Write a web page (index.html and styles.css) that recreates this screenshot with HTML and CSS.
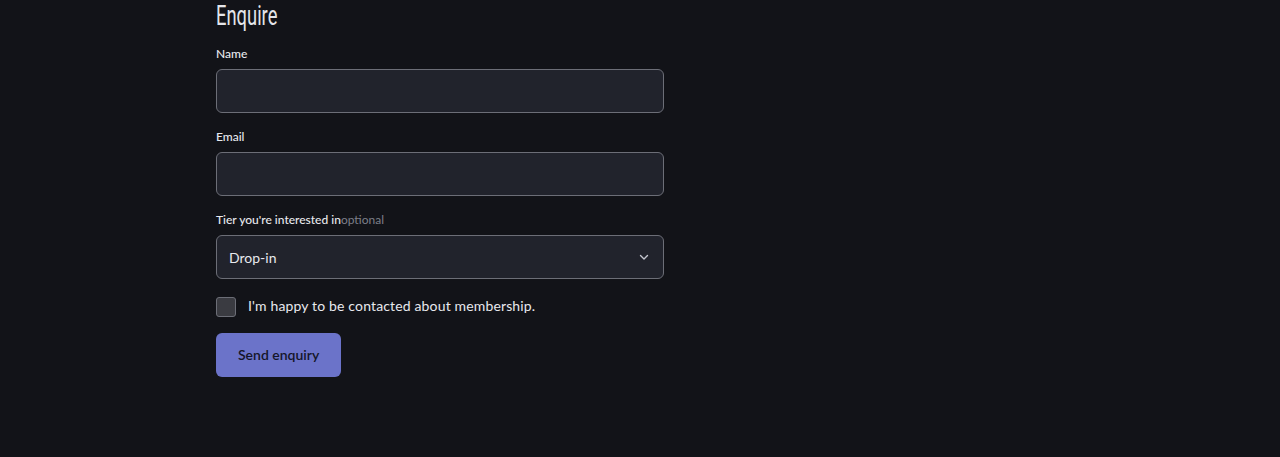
FILE: index.html
```html
<!DOCTYPE html>
<html lang="en">
<head>
  <meta charset="UTF-8">
  <title>Enquire</title>
  <link rel="stylesheet" href="styles.css">
</head>
<body>
  <form class="enquiry" onsubmit="return false">
    <h2 class="enquiry-title">Enquire</h2>

    <div class="field">
      <label for="name">Name</label>
      <input type="text" id="name" class="input">
    </div>

    <div class="field">
      <label for="email">Email</label>
      <input type="email" id="email" class="input">
    </div>

    <div class="field">
      <label for="tier">Tier you're interested in<span class="optional">optional</span></label>
      <div class="select-wrap">
        <select id="tier" class="input select">
          <option>Drop-in</option>
          <option>Part-time</option>
          <option>Full-time</option>
        </select>
        <svg class="chevron" width="12" height="12" viewBox="0 0 12 12" fill="none">
          <path d="M2.5 4.5 6 8l3.5-3.5" stroke="#c4c6cf" stroke-width="1.4" stroke-linecap="round" stroke-linejoin="round"/>
        </svg>
      </div>
    </div>

    <label class="consent">
      <input type="checkbox" class="checkbox">
      <span>I'm happy to be contacted about membership.</span>
    </label>

    <button type="submit" class="btn">Send enquiry</button>
  </form>
</body>
</html>
```

FILE: styles.css
```css
body {
  margin: 0;
  background: #121318;
  color: #e8e9ee;
  font-family: Lato, "Noto Sans", sans-serif;
}

.enquiry {
  width: 448px;
  margin-left: 216px;
}

/* condensed display heading, squeezed from Roboto */
.enquiry-title {
  display: inline-block;
  margin: 0 0 14px;
  font-family: Roboto, "DejaVu Sans", sans-serif;
  font-weight: 400;
  font-size: 27px;
  line-height: 32px;
  color: #e4e5ea;
  transform: scaleX(0.68);
  transform-origin: left center;
}

.field {
  margin-bottom: 16px;
}

.field label {
  display: block;
  font-size: 12px;
  font-weight: 500;
  line-height: 16px;
  margin-bottom: 7px;
  color: #e8e9ee;
}

.optional {
  color: #7d7f88;
  font-weight: 400;
}

.input {
  box-sizing: border-box;
  display: block;
  width: 100%;
  height: 44px;
  padding: 0 12px;
  background: #21232c;
  border: 1px solid #6c6e77;
  border-radius: 6px;
  color: #e8e9ee;
  font-family: inherit;
  font-size: 14px;
}

.select-wrap {
  position: relative;
}

.select {
  appearance: none;
  -webkit-appearance: none;
}

.chevron {
  position: absolute;
  right: 14px;
  top: 16px;
  pointer-events: none;
}

.consent {
  display: flex;
  align-items: center;
  gap: 12px;
  margin: 18px 0 16px;
  font-size: 14px;
  letter-spacing: 0.15px;
  color: #e8e9ee;
}

/* lift the text a touch so it sits level with the box */
.consent span {
  margin: -2px 0 2px;
}

.field:has(+ .consent) {
  margin-bottom: 0;
}

.checkbox {
  appearance: none;
  -webkit-appearance: none;
  margin: 0;
  width: 20px;
  height: 20px;
  background: #3a3b41;
  border: 1px solid #6c6e77;
  border-radius: 3px;
}

.btn {
  display: block;
  height: 44px;
  padding: 0 22px 2px;
  background: #6b73c9;
  color: #15162a;
  border: 0;
  border-radius: 6px;
  font-family: inherit;
  font-size: 14px;
  font-weight: 600;
}
```
